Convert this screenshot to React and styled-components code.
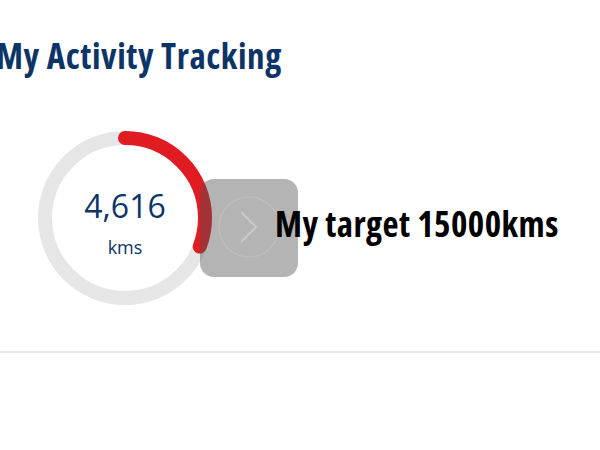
import React from "react";
import styled, { createGlobalStyle } from "styled-components";

const Global = createGlobalStyle`
  body {
    margin: 0;
    background: #fff;
    font-family: "Open Sans", "Liberation Sans", sans-serif;
  }
`;

const Page = styled.div`
  width: 600px;
  height: 450px;
  overflow: hidden;
`;

const Title = styled.h2`
  margin: 0;
  padding-top: 34px;
  margin-left: -4px;
  font-size: 35px;
  line-height: 44px;
  font-weight: 700;
  font-stretch: 75%;
  letter-spacing: 0.6px;
  color: #0d3466;
`;

const Row = styled.div`
  display: flex;
  align-items: flex-start;
  margin-top: 52px;
  padding-left: 37px;
`;

const Ring = styled.div`
  position: relative;
  width: 176px;
  height: 176px;
  flex: none;
`;

const RingCenter = styled.div`
  position: absolute;
  inset: 0;
  display: flex;
  flex-direction: column;
  align-items: center;
  justify-content: center;
  color: #0d3466;
  padding-top: 8px;
`;

const Value = styled.div`
  font-size: 32px;
  line-height: 40px;
  font-weight: 400;
`;

const Unit = styled.div`
  font-size: 18px;
  line-height: 24px;
  margin-top: 9px;
`;

const NextButton = styled.button`
  flex: none;
  width: 98px;
  height: 98px;
  margin-top: 49px;
  margin-left: -13px;
  border: none;
  border-radius: 14px;
  background: rgba(80, 80, 80, 0.43);
  display: flex;
  align-items: center;
  justify-content: center;
  padding: 0;
  position: relative;
  z-index: 1;
`;

const Target = styled.div`
  margin-top: 76px;
  margin-left: -23px;
  font-size: 35px;
  line-height: 36px;
  font-weight: 700;
  font-stretch: 75%;
  letter-spacing: 0.45px;
  color: #000;
  position: relative;
  z-index: 2;
  white-space: nowrap;
`;

const Divider = styled.hr`
  margin: 45px 0 0;
  border: none;
  height: 2px;
  background: #e6e6e6;
`;

const value = 4616;
const target = 15000;

const ProgressRing = () => {
  const r = 80;
  const c = 2 * Math.PI * r;
  const pct = value / target;
  return (
    <Ring>
      <svg width="176" height="176" viewBox="0 0 176 176">
        <circle cx="88" cy="88" r={r} fill="none" stroke="#e6e6e6" strokeWidth="14" />
        <circle
          cx="88"
          cy="88"
          r={r}
          fill="none"
          stroke="#e01b22"
          strokeWidth="14"
          strokeLinecap="round"
          strokeDasharray={`${c * pct} ${c}`}
          transform="rotate(-90 88 88)"
        />
      </svg>
      <RingCenter>
        <Value>4,616</Value>
        <Unit>kms</Unit>
      </RingCenter>
    </Ring>
  );
};

export default function App() {
  return (
    <Page>
      <Global />
      <Title>My Activity Tracking</Title>
      <Row>
        <ProgressRing />
        <NextButton aria-label="next">
          <svg width="64" height="64" viewBox="0 0 64 64">
            <circle cx="32" cy="31" r="30" fill="none" stroke="rgba(255,255,255,0.12)" strokeWidth="1.5" />
            <path d="M24 16 L39 31 L24 46" fill="none" stroke="rgba(255,255,255,0.28)" strokeWidth="2" />
          </svg>
        </NextButton>
        <Target>My target 15000kms</Target>
      </Row>
      <Divider />
    </Page>
  );
}
